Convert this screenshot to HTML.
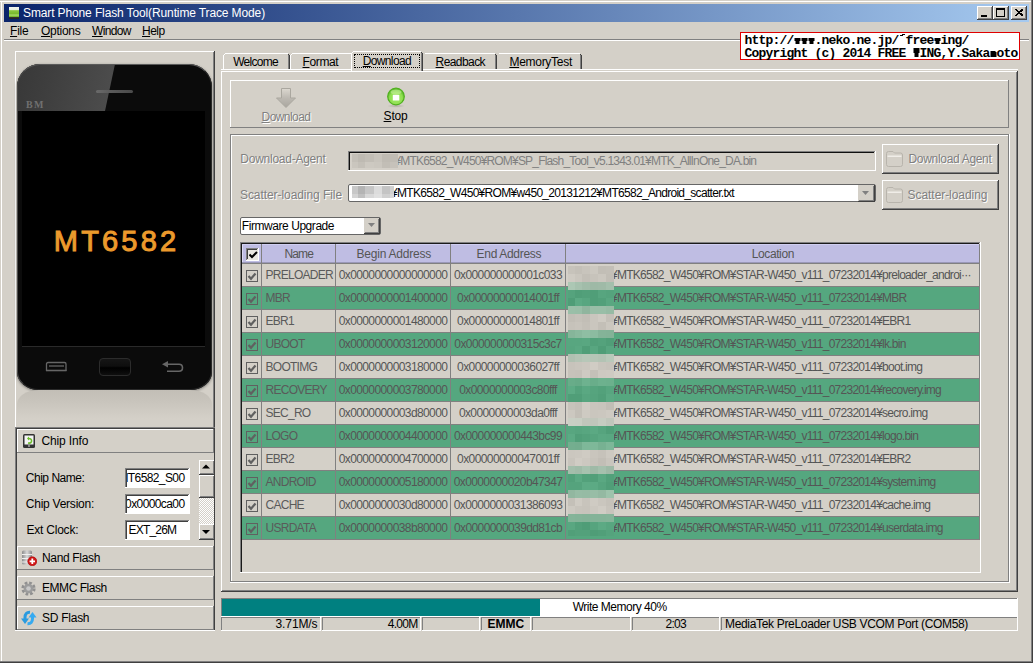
<!DOCTYPE html><html><head><meta charset="utf-8"><style>
html,body{margin:0;padding:0;}
body{width:1033px;height:663px;position:relative;overflow:hidden;background:#d4d0c8;font-family:"Liberation Sans",sans-serif;}
body div{position:absolute;box-sizing:border-box;}
u{text-decoration:underline;text-decoration-thickness:1px;text-underline-offset:1px;}
</style></head><body>
<div style="left:0px;top:1px;width:1032px;height:1px;background:#fff"></div>
<div style="left:1px;top:1px;width:1px;height:661px;background:#fff"></div>
<div style="left:1031px;top:0px;width:1px;height:662px;background:#808080"></div>
<div style="left:1032px;top:0px;width:1px;height:663px;background:#404040"></div>
<div style="left:0px;top:661px;width:1032px;height:1px;background:#808080"></div>
<div style="left:0px;top:662px;width:1033px;height:1px;background:#404040"></div>
<div style="left:4px;top:4px;width:1025px;height:18px;background:linear-gradient(to right,#0a246a,#a6caf0)"></div>
<div style="left:9px;top:7px;width:10px;height:12px;background:linear-gradient(#f0f4f0 0,#e8efe0 25%,#8cc63f 30%,#76b82a 60%,#b6e07a 65%,#76b82a 80%,#333 85%,#222 100%)"></div>
<div style="left:23px;top:6.00px;font-size:12px;line-height:15px;color:#fff;font-family:'Liberation Sans', sans-serif;font-weight:normal;white-space:pre;letter-spacing:-0.124px;">Smart Phone Flash Tool(Runtime Trace Mode)</div>
<div style="left:977px;top:6px;width:16px;height:14px;background:#d4d0c8"></div>
<div style="left:977px;top:6px;width:15px;height:1px;background:#fff"></div>
<div style="left:977px;top:6px;width:1px;height:13px;background:#fff"></div>
<div style="left:977px;top:19px;width:16px;height:1px;background:#404040"></div>
<div style="left:992px;top:6px;width:1px;height:14px;background:#404040"></div>
<div style="left:978px;top:18px;width:14px;height:1px;background:#808080"></div>
<div style="left:991px;top:7px;width:1px;height:12px;background:#808080"></div>
<div style="left:981px;top:15px;width:6px;height:2px;background:#000"></div>
<div style="left:993px;top:6px;width:16px;height:14px;background:#d4d0c8"></div>
<div style="left:993px;top:6px;width:15px;height:1px;background:#fff"></div>
<div style="left:993px;top:6px;width:1px;height:13px;background:#fff"></div>
<div style="left:993px;top:19px;width:16px;height:1px;background:#404040"></div>
<div style="left:1008px;top:6px;width:1px;height:14px;background:#404040"></div>
<div style="left:994px;top:18px;width:14px;height:1px;background:#808080"></div>
<div style="left:1007px;top:7px;width:1px;height:12px;background:#808080"></div>
<div style="left:996px;top:8px;width:9px;height:9px;border:1px solid #000;border-top-width:2px"></div>
<div style="left:1011px;top:6px;width:16px;height:14px;background:#d4d0c8"></div>
<div style="left:1011px;top:6px;width:15px;height:1px;background:#fff"></div>
<div style="left:1011px;top:6px;width:1px;height:13px;background:#fff"></div>
<div style="left:1011px;top:19px;width:16px;height:1px;background:#404040"></div>
<div style="left:1026px;top:6px;width:1px;height:14px;background:#404040"></div>
<div style="left:1012px;top:18px;width:14px;height:1px;background:#808080"></div>
<div style="left:1025px;top:7px;width:1px;height:12px;background:#808080"></div>
<svg style="position:absolute;left:1015px;top:9px" width="8" height="7" viewBox="0 0 8 7"><path d="M0.5 0.5 L7 6.5 M1.5 0.5 L8 6.5 M7 0.5 L0.5 6.5 M8 0.5 L1.5 6.5" stroke="#000" stroke-width="1" shape-rendering="crispEdges"/></svg>
<div style="left:10px;top:24.00px;font-size:12px;line-height:15px;color:#000;font-family:'Liberation Sans', sans-serif;font-weight:normal;white-space:pre;letter-spacing:-0.190px;"><u>F</u>ile</div>
<div style="left:41px;top:24.00px;font-size:12px;line-height:15px;color:#000;font-family:'Liberation Sans', sans-serif;font-weight:normal;white-space:pre;letter-spacing:-0.268px;"><u>O</u>ptions</div>
<div style="left:92px;top:24.00px;font-size:12px;line-height:15px;color:#000;font-family:'Liberation Sans', sans-serif;font-weight:normal;white-space:pre;letter-spacing:-0.665px;"><u>W</u>indow</div>
<div style="left:142px;top:24.00px;font-size:12px;line-height:15px;color:#000;font-family:'Liberation Sans', sans-serif;font-weight:normal;white-space:pre;letter-spacing:-0.497px;"><u>H</u>elp</div>
<div style="left:4px;top:39px;width:736px;height:1px;background:#808080"></div>
<div style="left:4px;top:40px;width:736px;height:1px;background:#fff"></div>
<div style="left:1020px;top:39px;width:9px;height:1px;background:#808080"></div>
<div style="left:1020px;top:40px;width:9px;height:1px;background:#fff"></div>
<div style="left:740px;top:32px;width:280px;height:28px;background:#fff;border:1px solid #e00000"></div>
<div style="left:744.5px;top:33.00px;font-size:13px;line-height:16px;color:#000;font-family:'Liberation Mono',monospace;font-weight:bold;white-space:pre;letter-spacing:-0.800px;">http://<span style="display:inline-block;width:7px;height:6px;position:relative"><svg style="position:absolute;left:0;top:0" width="7" height="6"><path d="M0.5 0 H6.5 V3 H5.5 V6 H1.5 V3 H0.5 Z" fill="#000"/></svg></span><span style="display:inline-block;width:7px;height:6px;position:relative"><svg style="position:absolute;left:0;top:0" width="7" height="6"><path d="M0.5 0 H6.5 V3 H5.5 V6 H1.5 V3 H0.5 Z" fill="#000"/></svg></span><span style="display:inline-block;width:7px;height:6px;position:relative"><svg style="position:absolute;left:0;top:0" width="7" height="6"><path d="M0.5 0 H6.5 V3 H5.5 V6 H1.5 V3 H0.5 Z" fill="#000"/></svg></span>.neko.ne.jp/<span style="display:inline-block;width:7px;height:10px;position:relative"><svg style="position:absolute;left:0;top:0" width="7" height="10"><path d="M1 1 H3 V2 H1 Z M3 0 H6 V1 H3 Z M2 1 H4 V2 H2 Z" fill="#000"/></svg></span>free<span style="display:inline-block;width:7px;height:6px;position:relative"><svg style="position:absolute;left:0;top:0" width="7" height="6"><path d="M0.5 0 H6.5 V3 H5.5 V6 H1.5 V3 H0.5 Z" fill="#000"/></svg></span>ing/</div>
<div style="left:744.5px;top:46.00px;font-size:13px;line-height:16px;color:#000;font-family:'Liberation Mono',monospace;font-weight:bold;white-space:pre;letter-spacing:-0.800px;">Copyright (c) 2014 FREE <span style="display:inline-block;width:7px;height:9px;position:relative"><svg style="position:absolute;left:0;top:0" width="7" height="9"><path d="M0.5 0 H6.5 V5 H5.5 V9 H1.5 V5 H0.5 Z" fill="#000"/></svg></span>ING,Y.Saka<span style="display:inline-block;width:7px;height:6px;position:relative"><svg style="position:absolute;left:0;top:0" width="7" height="6"><path d="M0.5 0 H5.5 V1 H6.5 V6 H0.5 Z" fill="#000"/></svg></span>oto</div>
<div style="left:15px;top:51px;width:200px;height:1px;background:#fff"></div>
<div style="left:15px;top:51px;width:1px;height:377px;background:#fff"></div>
<div style="left:213px;top:52px;width:1px;height:376px;background:#808080"></div>
<div style="left:214px;top:51px;width:1px;height:378px;background:#404040"></div>
<div style="left:17px;top:64px;width:195px;height:326px;border-radius:23px 23px 22px 22px/23px 23px 18px 18px;background:#0b0b0b;box-shadow:0 1px 3px rgba(0,0,0,0.45)"></div>
<div style="left:17px;top:64px;width:195px;height:47px;border-radius:23px 23px 0 0;overflow:hidden;"><div style="left:-10px;top:0;width:108px;height:60px;background:linear-gradient(to right,#363636,#3e3e3e 40%,#4c4c4c);transform:skewX(-12deg);transform-origin:0 0"></div></div>
<div style="left:17px;top:64px;width:195px;height:326px;border-radius:23px 23px 22px 22px/23px 23px 18px 18px;border:1px solid #2a2a2a;border-top-color:#5a5a5a;border-left-color:#4a4a4a"></div>
<div style="left:96px;top:90px;width:37px;height:3px;background:linear-gradient(to right,#6a6a6a,#5e5e5e 30%,#4a4a4a);border-radius:2px"></div>
<div style="left:26px;top:99.00px;font-size:10px;line-height:12px;color:#707070;font-family:'Liberation Serif',serif;font-weight:bold;white-space:pre;letter-spacing:1.445px;">BM</div>
<div style="left:22px;top:111px;width:183px;height:235px;background:#000"></div>
<div style="left:22px;top:346px;width:183px;height:1px;background:#2a2a2a"></div>
<div style="left:53.8px;top:223.00px;font-size:29px;line-height:36px;color:#ec9a2c;font-family:'Liberation Sans', sans-serif;font-weight:normal;white-space:pre;letter-spacing:3.185px;-webkit-text-stroke:1px #ec9a2c;">MT6582</div>
<svg style="position:absolute;left:40px;top:355px" width="150" height="25" viewBox="0 0 150 25"><path d="M6.5 16 V9 Q6.5 7.5 8 7.5 H24.5 Q26 7.5 26 9 V16" fill="none" stroke="#666" stroke-width="1.3"/><line x1="9" y1="11" x2="24" y2="11" stroke="#666" stroke-width="1.3"/><line x1="6" y1="15.5" x2="26.5" y2="15.5" stroke="#666" stroke-width="1.6"/><defs><linearGradient id="hb" x1="0" y1="0" x2="0" y2="1"><stop offset="0" stop-color="#161616"/><stop offset="0.45" stop-color="#0e0e0e"/><stop offset="0.55" stop-color="#000"/><stop offset="1" stop-color="#101010"/></linearGradient></defs><rect x="59.5" y="3.5" width="31" height="17" rx="3.5" fill="url(#hb)" stroke="#2c2c2c" stroke-width="1"/><path d="M126 9.3 H139 Q142.5 9.3 142.5 12.8 Q142.5 16.3 139 16.3 H127" fill="none" stroke="#666" stroke-width="1.6"/><path d="M122 9.3 L128 6 L128 12.6 Z" fill="#666"/></svg>
<div style="left:17px;top:390px;width:195px;height:36px;border-radius:22px 22px 0 0/14px 14px 0 0;background:linear-gradient(#c2beb6,#c9c5bd 35%,#d4d0c8 80%)"></div>
<div style="left:16px;top:428px;width:199px;height:1px;background:#404040"></div>
<div style="left:16px;top:428px;width:1px;height:203px;background:#404040"></div>
<div style="left:15px;top:427px;width:200px;height:1px;background:#808080"></div>
<div style="left:15px;top:428px;width:1px;height:203px;background:#808080"></div>
<div style="left:214px;top:428px;width:1px;height:203px;background:#404040"></div>
<div style="left:15px;top:630px;width:200px;height:1px;background:#fff"></div>
<div style="left:17px;top:429px;width:197px;height:1px;background:#fff"></div>
<div style="left:17px;top:429px;width:1px;height:24px;background:#fff"></div>
<div style="left:17px;top:452px;width:197px;height:1px;background:#808080"></div>
<div style="left:213px;top:429px;width:1px;height:24px;background:#808080"></div>
<svg style="position:absolute;left:23px;top:434px" width="12" height="14" viewBox="0 0 12 14"><rect x="0" y="0" width="12" height="14" rx="1.5" fill="#333"/><rect x="1.5" y="1.5" width="9" height="9" fill="#f4f4f4"/><path d="M4 4.5 L6 2.5 L6 6.5 Z" fill="#6cbd2a"/><path d="M5.5 4.5 Q9 4.5 8.5 7.5 Q8 9.5 5 9" fill="none" stroke="#6cbd2a" stroke-width="1.6"/><rect x="5" y="11.5" width="2" height="1" fill="#ddd"/></svg>
<div style="left:41.5px;top:434.00px;font-size:12px;line-height:15px;color:#000;font-family:'Liberation Sans', sans-serif;font-weight:normal;white-space:pre;letter-spacing:-0.148px;">Chip Info</div>
<div style="left:25.8px;top:471.00px;font-size:12px;line-height:15px;color:#000;font-family:'Liberation Sans', sans-serif;font-weight:normal;white-space:pre;letter-spacing:-0.486px;">Chip Name:</div>
<div style="left:25.8px;top:497.00px;font-size:12px;line-height:15px;color:#000;font-family:'Liberation Sans', sans-serif;font-weight:normal;white-space:pre;letter-spacing:-0.244px;">Chip Version:</div>
<div style="left:26.5px;top:523.00px;font-size:12px;line-height:15px;color:#000;font-family:'Liberation Sans', sans-serif;font-weight:normal;white-space:pre;letter-spacing:-0.222px;">Ext Clock:</div>
<div style="left:125px;top:468px;width:65px;height:20px;background:#fff"></div>
<div style="left:125px;top:468px;width:64px;height:1px;background:#808080"></div>
<div style="left:125px;top:468px;width:1px;height:19px;background:#808080"></div>
<div style="left:126px;top:469px;width:62px;height:1px;background:#404040"></div>
<div style="left:126px;top:469px;width:1px;height:18px;background:#404040"></div>
<div style="left:125px;top:487px;width:65px;height:1px;background:#fff"></div>
<div style="left:189px;top:468px;width:1px;height:20px;background:#fff"></div>
<div style="left:127px;top:470px;width:61px;height:16px;overflow:hidden"><div style="right:3.5px;top:0;font-size:12px;line-height:16px;white-space:pre;letter-spacing:-0.6px">MT6582_S00</div></div>
<div style="left:125px;top:494px;width:65px;height:20px;background:#fff"></div>
<div style="left:125px;top:494px;width:64px;height:1px;background:#808080"></div>
<div style="left:125px;top:494px;width:1px;height:19px;background:#808080"></div>
<div style="left:126px;top:495px;width:62px;height:1px;background:#404040"></div>
<div style="left:126px;top:495px;width:1px;height:18px;background:#404040"></div>
<div style="left:125px;top:513px;width:65px;height:1px;background:#fff"></div>
<div style="left:189px;top:494px;width:1px;height:20px;background:#fff"></div>
<div style="left:127px;top:496px;width:61px;height:16px;overflow:hidden"><div style="right:3.5px;top:0;font-size:12px;line-height:16px;white-space:pre;letter-spacing:-0.6px">0x0000ca00</div></div>
<div style="left:125px;top:520px;width:65px;height:20px;background:#fff"></div>
<div style="left:125px;top:520px;width:64px;height:1px;background:#808080"></div>
<div style="left:125px;top:520px;width:1px;height:19px;background:#808080"></div>
<div style="left:126px;top:521px;width:62px;height:1px;background:#404040"></div>
<div style="left:126px;top:521px;width:1px;height:18px;background:#404040"></div>
<div style="left:125px;top:539px;width:65px;height:1px;background:#fff"></div>
<div style="left:189px;top:520px;width:1px;height:20px;background:#fff"></div>
<div style="left:127px;top:522px;width:61px;height:16px;overflow:hidden"><div style="left:1.5px;top:0;font-size:12px;line-height:16px;white-space:pre;letter-spacing:-0.8px">EXT_26M</div></div>
<div style="left:199px;top:474px;width:15px;height:50px;background:repeating-conic-gradient(#fff 0 25%,#d4d0c8 0 50%) 0 0/2px 2px"></div>
<div style="left:199px;top:460px;width:16px;height:15px;background:#d4d0c8"></div>
<div style="left:199px;top:460px;width:15px;height:1px;background:#fff"></div>
<div style="left:199px;top:460px;width:1px;height:14px;background:#fff"></div>
<div style="left:199px;top:474px;width:16px;height:1px;background:#404040"></div>
<div style="left:214px;top:460px;width:1px;height:15px;background:#404040"></div>
<div style="left:200px;top:473px;width:14px;height:1px;background:#808080"></div>
<div style="left:213px;top:461px;width:1px;height:13px;background:#808080"></div>
<svg style="position:absolute;left:202px;top:464px" width="9" height="5"><path d="M0 4.5 H8 L4 0.5 Z" fill="#000"/></svg>
<div style="left:199px;top:475px;width:16px;height:23px;background:#d4d0c8"></div>
<div style="left:199px;top:475px;width:15px;height:1px;background:#fff"></div>
<div style="left:199px;top:475px;width:1px;height:22px;background:#fff"></div>
<div style="left:199px;top:497px;width:16px;height:1px;background:#404040"></div>
<div style="left:214px;top:475px;width:1px;height:23px;background:#404040"></div>
<div style="left:200px;top:496px;width:14px;height:1px;background:#808080"></div>
<div style="left:213px;top:476px;width:1px;height:21px;background:#808080"></div>
<div style="left:199px;top:524px;width:16px;height:16px;background:#d4d0c8"></div>
<div style="left:199px;top:524px;width:15px;height:1px;background:#fff"></div>
<div style="left:199px;top:524px;width:1px;height:15px;background:#fff"></div>
<div style="left:199px;top:539px;width:16px;height:1px;background:#404040"></div>
<div style="left:214px;top:524px;width:1px;height:16px;background:#404040"></div>
<div style="left:200px;top:538px;width:14px;height:1px;background:#808080"></div>
<div style="left:213px;top:525px;width:1px;height:14px;background:#808080"></div>
<svg style="position:absolute;left:202px;top:530px" width="9" height="5"><path d="M0 0 H8 L4 4 Z" fill="#000"/></svg>
<div style="left:17px;top:546px;width:197px;height:1px;background:#fff"></div>
<div style="left:17px;top:546px;width:1px;height:24px;background:#fff"></div>
<div style="left:17px;top:569px;width:197px;height:1px;background:#808080"></div>
<div style="left:213px;top:546px;width:1px;height:24px;background:#808080"></div>
<svg style="position:absolute;left:21px;top:550px" width="16" height="16" viewBox="0 0 16 16"><defs><linearGradient id="ng" x1="0" x2="1"><stop offset="0" stop-color="#8c8c8c"/><stop offset="0.5" stop-color="#d8d8d8"/><stop offset="1" stop-color="#8c8c8c"/></linearGradient></defs><rect x="1" y="0.5" width="10" height="14" rx="1.5" fill="url(#ng)"/><path d="M1 4.5 H11 M1 8.5 H11 M1 12 H11" stroke="#f0f0f0" stroke-width="1"/><circle cx="11.3" cy="11.3" r="4.5" fill="#d01818" stroke="#a00" stroke-width="0.6"/><path d="M11.3 8.6 V14 M8.6 11.3 H14" stroke="#fff" stroke-width="1.8"/></svg>
<div style="left:42px;top:551.00px;font-size:12px;line-height:15px;color:#000;font-family:'Liberation Sans', sans-serif;font-weight:normal;white-space:pre;letter-spacing:-0.338px;">Nand Flash</div>
<div style="left:17px;top:576px;width:197px;height:1px;background:#fff"></div>
<div style="left:17px;top:576px;width:1px;height:24px;background:#fff"></div>
<div style="left:17px;top:599px;width:197px;height:1px;background:#808080"></div>
<div style="left:213px;top:576px;width:1px;height:24px;background:#808080"></div>
<svg style="position:absolute;left:21px;top:581px" width="16" height="16" viewBox="0 0 16 16"><circle cx="7.5" cy="7.5" r="5.6" fill="none" stroke="#909090" stroke-width="3" stroke-dasharray="2.6 1.8"/><circle cx="7.5" cy="7.5" r="4.8" fill="#9c9c9c"/><circle cx="7.5" cy="7.5" r="2.3" fill="#c8c8c8"/></svg>
<div style="left:42px;top:581.00px;font-size:12px;line-height:15px;color:#000;font-family:'Liberation Sans', sans-serif;font-weight:normal;white-space:pre;letter-spacing:-0.454px;">EMMC Flash</div>
<div style="left:17px;top:606px;width:197px;height:1px;background:#fff"></div>
<div style="left:17px;top:606px;width:1px;height:24px;background:#fff"></div>
<div style="left:17px;top:629px;width:197px;height:1px;background:#808080"></div>
<div style="left:213px;top:606px;width:1px;height:24px;background:#808080"></div>
<svg style="position:absolute;left:21px;top:610px" width="16" height="16" viewBox="0 0 16 16"><path d="M9 2.3 Q4 2 4 7.5 V9" fill="none" stroke="#2a9be0" stroke-width="3"/><path d="M0 8.5 H8 L4 14 Z" fill="#2a9be0"/><path d="M6.5 13.7 Q11.5 14 11.5 8.5 V7" fill="none" stroke="#36aaf0" stroke-width="3"/><path d="M7.5 7.5 H15.5 L11.5 2 Z" fill="#36aaf0"/></svg>
<div style="left:42px;top:611.00px;font-size:12px;line-height:15px;color:#000;font-family:'Liberation Sans', sans-serif;font-weight:normal;white-space:pre;letter-spacing:-0.257px;">SD Flash</div>
<div style="left:221px;top:69px;width:797px;height:1px;background:#fff"></div>
<div style="left:221px;top:71px;width:796px;height:1px;background:#fff"></div>
<div style="left:221px;top:71px;width:1px;height:521px;background:#fff"></div>
<div style="left:1016px;top:72px;width:1px;height:519px;background:#808080"></div>
<div style="left:1017px;top:71px;width:1px;height:521px;background:#404040"></div>
<div style="left:222px;top:590px;width:795px;height:1px;background:#808080"></div>
<div style="left:221px;top:591px;width:797px;height:1px;background:#404040"></div>
<div style="left:223px;top:53px;width:67px;height:16px;background:#d4d0c8"></div>
<div style="left:225px;top:53px;width:63px;height:1px;background:#fff"></div>
<div style="left:223px;top:55px;width:1px;height:14px;background:#fff"></div>
<div style="left:224px;top:54px;width:1px;height:1px;background:#fff"></div>
<div style="left:288px;top:54px;width:1px;height:15px;background:#808080"></div>
<div style="left:289px;top:55px;width:1px;height:14px;background:#404040"></div>
<div style="left:288px;top:54px;width:1px;height:1px;background:#404040"></div>
<div style="left:290px;top:53px;width:63px;height:16px;background:#d4d0c8"></div>
<div style="left:292px;top:53px;width:61px;height:1px;background:#fff"></div>
<div style="left:290px;top:55px;width:1px;height:14px;background:#fff"></div>
<div style="left:291px;top:54px;width:1px;height:1px;background:#fff"></div>
<div style="left:423px;top:53px;width:74px;height:16px;background:#d4d0c8"></div>
<div style="left:425px;top:53px;width:70px;height:1px;background:#fff"></div>
<div style="left:495px;top:54px;width:1px;height:15px;background:#808080"></div>
<div style="left:496px;top:55px;width:1px;height:14px;background:#404040"></div>
<div style="left:495px;top:54px;width:1px;height:1px;background:#404040"></div>
<div style="left:497px;top:53px;width:85px;height:16px;background:#d4d0c8"></div>
<div style="left:499px;top:53px;width:81px;height:1px;background:#fff"></div>
<div style="left:580px;top:54px;width:1px;height:15px;background:#808080"></div>
<div style="left:581px;top:55px;width:1px;height:14px;background:#404040"></div>
<div style="left:580px;top:54px;width:1px;height:1px;background:#404040"></div>
<div style="left:351px;top:51px;width:72px;height:20px;background:#d4d0c8"></div>
<div style="left:353px;top:51px;width:68px;height:1px;background:#fff"></div>
<div style="left:351px;top:53px;width:1px;height:18px;background:#fff"></div>
<div style="left:352px;top:52px;width:1px;height:1px;background:#fff"></div>
<div style="left:421px;top:52px;width:1px;height:19px;background:#808080"></div>
<div style="left:422px;top:53px;width:1px;height:18px;background:#404040"></div>
<div style="left:421px;top:52px;width:1px;height:1px;background:#404040"></div>
<div style="left:233.2px;top:55.00px;font-size:12px;line-height:15px;color:#000;font-family:'Liberation Sans', sans-serif;font-weight:normal;white-space:pre;letter-spacing:-0.728px;">Welcome</div>
<div style="left:302.5px;top:55.00px;font-size:12px;line-height:15px;color:#000;font-family:'Liberation Sans', sans-serif;font-weight:normal;white-space:pre;letter-spacing:-0.372px;"><u>F</u>ormat</div>
<div style="left:362.7px;top:54.00px;font-size:12px;line-height:15px;color:#000;font-family:'Liberation Sans', sans-serif;font-weight:normal;white-space:pre;letter-spacing:-0.634px;"><u>D</u>ownload</div>
<div style="left:435.6px;top:55.00px;font-size:12px;line-height:15px;color:#000;font-family:'Liberation Sans', sans-serif;font-weight:normal;white-space:pre;letter-spacing:-0.581px;"><u>R</u>eadback</div>
<div style="left:509.4px;top:55.00px;font-size:12px;line-height:15px;color:#000;font-family:'Liberation Sans', sans-serif;font-weight:normal;white-space:pre;letter-spacing:-0.276px;"><u>M</u>emoryTest</div>
<div style="left:354px;top:54px;width:66px;height:14px;border:1px dotted #000"></div>
<div style="left:230px;top:80px;width:779px;height:1px;background:#fff"></div>
<div style="left:230px;top:80px;width:1px;height:48px;background:#fff"></div>
<div style="left:230px;top:127px;width:779px;height:1px;background:#808080"></div>
<div style="left:1008px;top:80px;width:1px;height:48px;background:#808080"></div>
<svg style="position:absolute;left:276px;top:88px" width="20" height="20" viewBox="0 0 20 20"><defs><linearGradient id="ga" x1="0" y1="0" x2="0" y2="1"><stop offset="0" stop-color="#dcd8d0"/><stop offset="0.5" stop-color="#bdb9b2"/><stop offset="1" stop-color="#a9a69f"/></linearGradient></defs><path d="M5.5 0.5 H14.5 V10 H19.5 L10 19.5 L0.5 10 H5.5 Z" fill="url(#ga)" stroke="#aaa79f" stroke-width="1"/></svg>
<div style="left:262.5px;top:111.00px;font-size:12px;line-height:15px;color:#fff;font-family:'Liberation Sans', sans-serif;font-weight:normal;white-space:pre;letter-spacing:-0.547px;"><u>D</u>ownload</div>
<div style="left:261.5px;top:110.00px;font-size:12px;line-height:15px;color:#808080;font-family:'Liberation Sans', sans-serif;font-weight:normal;white-space:pre;letter-spacing:-0.547px;"><u>D</u>ownload</div>
<svg style="position:absolute;left:385px;top:86px" width="22" height="22" viewBox="0 0 22 22"><defs><radialGradient id="gs" cx="0.5" cy="0.62" r="0.55"><stop offset="0" stop-color="#a0e868"/><stop offset="0.7" stop-color="#90e050"/><stop offset="1" stop-color="#58b828"/></radialGradient><radialGradient id="sh" cx="0.5" cy="0.5" r="0.5"><stop offset="0" stop-color="#b0aca4"/><stop offset="1" stop-color="#d4d0c8"/></radialGradient></defs><ellipse cx="11" cy="20" rx="9" ry="1.8" fill="url(#sh)"/><circle cx="11" cy="10.5" r="8.3" fill="url(#gs)" stroke="#50b01e" stroke-width="1.2"/><ellipse cx="11" cy="6" rx="5.5" ry="2.5" fill="#c8f0a0" opacity="0.6"/><rect x="7.8" y="8.8" width="6.5" height="5.7" fill="#fff"/></svg>
<div style="left:383.6px;top:109.00px;font-size:12px;line-height:15px;color:#000;font-family:'Liberation Sans', sans-serif;font-weight:normal;white-space:pre;letter-spacing:-0.226px;"><u>S</u>top</div>
<div style="left:230px;top:134px;width:779px;height:1px;background:#808080"></div>
<div style="left:230px;top:134px;width:1px;height:448px;background:#808080"></div>
<div style="left:231px;top:135px;width:777px;height:1px;background:#fff"></div>
<div style="left:231px;top:135px;width:1px;height:446px;background:#fff"></div>
<div style="left:230px;top:581px;width:779px;height:1px;background:#808080"></div>
<div style="left:1008px;top:134px;width:1px;height:448px;background:#808080"></div>
<div style="left:230px;top:582px;width:780px;height:1px;background:#fff"></div>
<div style="left:1009px;top:134px;width:1px;height:449px;background:#fff"></div>
<div style="left:240.3px;top:152.00px;font-size:12px;line-height:15px;color:#808080;font-family:'Liberation Sans', sans-serif;font-weight:normal;white-space:pre;letter-spacing:-0.252px;text-shadow:1px 1px 0 #fff;">Download-Agent</div>
<div style="left:240px;top:188.00px;font-size:12px;line-height:15px;color:#808080;font-family:'Liberation Sans', sans-serif;font-weight:normal;white-space:pre;letter-spacing:-0.070px;text-shadow:1px 1px 0 #fff;">Scatter-loading File</div>
<div style="left:348px;top:151px;width:528px;height:20px;background:#d4d0c8"></div>
<div style="left:348px;top:151px;width:527px;height:1px;background:#808080"></div>
<div style="left:348px;top:151px;width:1px;height:19px;background:#808080"></div>
<div style="left:349px;top:152px;width:525px;height:1px;background:#101010"></div>
<div style="left:349px;top:152px;width:1px;height:18px;background:#101010"></div>
<div style="left:348px;top:170px;width:528px;height:1px;background:#fff"></div>
<div style="left:875px;top:151px;width:1px;height:20px;background:#fff"></div>
<div style="left:394.5px;top:154.00px;font-size:12px;line-height:15px;color:#808080;font-family:'Liberation Sans', sans-serif;font-weight:normal;white-space:pre;letter-spacing:-0.815px;">&yen;MTK6582_W450&yen;ROM&yen;SP_Flash_Tool_v5.1343.01&yen;MTK_AllInOne_DA.bin</div>
<div style="left:352px;top:154px;width:46px;height:14px;overflow:hidden"><div style="left:0px;top:0px;width:6px;height:8px;background:#c4c0b8"></div><div style="left:6px;top:0px;width:7px;height:8px;background:#bebab2"></div><div style="left:13px;top:0px;width:9px;height:8px;background:#c2beb6"></div><div style="left:22px;top:0px;width:8px;height:8px;background:#c8c4bc"></div><div style="left:30px;top:0px;width:8px;height:8px;background:#bfbbb3"></div><div style="left:38px;top:0px;width:8px;height:8px;background:#c0bcb4"></div><div style="left:0px;top:8px;width:6px;height:6px;background:#cac6be"></div><div style="left:6px;top:8px;width:7px;height:6px;background:#c4c0b8"></div><div style="left:13px;top:8px;width:9px;height:6px;background:#cdc9c1"></div><div style="left:22px;top:8px;width:8px;height:6px;background:#cbc7bf"></div><div style="left:30px;top:8px;width:8px;height:6px;background:#c2beb6"></div><div style="left:38px;top:8px;width:8px;height:6px;background:#c6c2ba"></div></div>
<div style="left:348px;top:184px;width:528px;height:18px;background:#fff;border:1px solid #666;border-radius:2px"></div>
<div style="left:391px;top:186.00px;font-size:12px;line-height:15px;color:#000;font-family:'Liberation Sans', sans-serif;font-weight:normal;white-space:pre;letter-spacing:-0.700px;">&yen;MTK6582_W450&yen;ROM&yen;w450_20131212&yen;MT6582_Android_scatter.txt</div>
<div style="left:352px;top:186px;width:42px;height:12px;overflow:hidden"><div style="left:0px;top:0px;width:6px;height:8px;background:#c8c8c8"></div><div style="left:6px;top:0px;width:7px;height:8px;background:#b4b4b4"></div><div style="left:13px;top:0px;width:9px;height:8px;background:#c6c6c6"></div><div style="left:22px;top:0px;width:8px;height:8px;background:#dcdcdc"></div><div style="left:30px;top:0px;width:8px;height:8px;background:#c4c4c4"></div><div style="left:38px;top:0px;width:4px;height:8px;background:#d0d0d0"></div><div style="left:0px;top:8px;width:6px;height:4px;background:#d4d4d4"></div><div style="left:6px;top:8px;width:7px;height:4px;background:#c0c0c0"></div><div style="left:13px;top:8px;width:9px;height:4px;background:#d8d8d8"></div><div style="left:22px;top:8px;width:8px;height:4px;background:#e0e0e0"></div><div style="left:30px;top:8px;width:8px;height:4px;background:#d0d0d0"></div><div style="left:38px;top:8px;width:4px;height:4px;background:#d8d8d8"></div></div>
<div style="left:858px;top:185px;width:17px;height:17px;background:#d4d0c8"></div>
<div style="left:874px;top:185px;width:1px;height:17px;background:#404040"></div>
<div style="left:858px;top:201px;width:17px;height:1px;background:#404040"></div>
<div style="left:873px;top:186px;width:1px;height:15px;background:#808080"></div>
<div style="left:859px;top:200px;width:15px;height:1px;background:#808080"></div>
<svg style="position:absolute;left:862px;top:191px" width="8" height="5"><path d="M0 0 H7 L3.5 4 Z" fill="#808080"/></svg>
<div style="left:882px;top:144px;width:117px;height:30px;background:#d4d0c8"></div>
<div style="left:882px;top:144px;width:116px;height:1px;background:#fff"></div>
<div style="left:882px;top:144px;width:1px;height:29px;background:#fff"></div>
<div style="left:882px;top:173px;width:117px;height:1px;background:#404040"></div>
<div style="left:998px;top:144px;width:1px;height:30px;background:#404040"></div>
<div style="left:883px;top:172px;width:115px;height:1px;background:#808080"></div>
<div style="left:997px;top:145px;width:1px;height:28px;background:#808080"></div>
<svg style="position:absolute;left:886px;top:151px" width="17" height="16" viewBox="0 0 17 16"><defs><linearGradient id="fg{y}" x1="0" y1="0" x2="0" y2="1"><stop offset="0" stop-color="#e2dfd8"/><stop offset="1" stop-color="#bfbcb5"/></linearGradient></defs><path d="M0.5 2.5 Q0.5 0.5 2.5 0.5 H7 L8.5 2 H14.5 Q16.5 2 16.5 4 V13.5 Q16.5 15.5 14.5 15.5 H2.5 Q0.5 15.5 0.5 13.5 Z" fill="url(#fg144)" stroke="#b8b4ac"/><rect x="1.5" y="4.5" width="14" height="1.5" fill="#f0ede8"/></svg>
<div style="left:908.5px;top:152.00px;font-size:12px;line-height:15px;color:#808080;font-family:'Liberation Sans', sans-serif;font-weight:normal;white-space:pre;letter-spacing:-0.315px;text-shadow:1px 1px 0 #fff;">Download Agent</div>
<div style="left:882px;top:180px;width:117px;height:30px;background:#d4d0c8"></div>
<div style="left:882px;top:180px;width:116px;height:1px;background:#fff"></div>
<div style="left:882px;top:180px;width:1px;height:29px;background:#fff"></div>
<div style="left:882px;top:209px;width:117px;height:1px;background:#404040"></div>
<div style="left:998px;top:180px;width:1px;height:30px;background:#404040"></div>
<div style="left:883px;top:208px;width:115px;height:1px;background:#808080"></div>
<div style="left:997px;top:181px;width:1px;height:28px;background:#808080"></div>
<svg style="position:absolute;left:886px;top:187px" width="17" height="16" viewBox="0 0 17 16"><defs><linearGradient id="fg{y}" x1="0" y1="0" x2="0" y2="1"><stop offset="0" stop-color="#e2dfd8"/><stop offset="1" stop-color="#bfbcb5"/></linearGradient></defs><path d="M0.5 2.5 Q0.5 0.5 2.5 0.5 H7 L8.5 2 H14.5 Q16.5 2 16.5 4 V13.5 Q16.5 15.5 14.5 15.5 H2.5 Q0.5 15.5 0.5 13.5 Z" fill="url(#fg180)" stroke="#b8b4ac"/><rect x="1.5" y="4.5" width="14" height="1.5" fill="#f0ede8"/></svg>
<div style="left:907.6px;top:188.00px;font-size:12px;line-height:15px;color:#808080;font-family:'Liberation Sans', sans-serif;font-weight:normal;white-space:pre;letter-spacing:-0.061px;text-shadow:1px 1px 0 #fff;">Scatter-loading</div>
<div style="left:240px;top:217px;width:141px;height:18px;background:#fff;border:1px solid #666;border-radius:2px"></div>
<div style="left:241.8px;top:219.00px;font-size:12px;line-height:15px;color:#000;font-family:'Liberation Sans', sans-serif;font-weight:normal;white-space:pre;letter-spacing:-0.442px;">Firmware Upgrade</div>
<div style="left:364px;top:218px;width:16px;height:16px;background:#d4d0c8"></div>
<div style="left:379px;top:218px;width:1px;height:16px;background:#404040"></div>
<div style="left:364px;top:233px;width:16px;height:1px;background:#404040"></div>
<div style="left:378px;top:219px;width:1px;height:14px;background:#808080"></div>
<div style="left:365px;top:232px;width:14px;height:1px;background:#808080"></div>
<svg style="position:absolute;left:368px;top:223px" width="8" height="5"><path d="M0 0 H7 L3.5 4 Z" fill="#808080"/></svg>
<div style="left:240px;top:242px;width:741px;height:1px;background:#808080"></div>
<div style="left:240px;top:242px;width:1px;height:331px;background:#808080"></div>
<div style="left:241px;top:243px;width:739px;height:1px;background:#1a1a1a"></div>
<div style="left:241px;top:243px;width:1px;height:329px;background:#1a1a1a"></div>
<div style="left:240px;top:572px;width:741px;height:1px;background:#fff"></div>
<div style="left:980px;top:242px;width:1px;height:331px;background:#fff"></div>
<div style="left:979px;top:243px;width:1px;height:328px;background:#d4d0c8"></div>
<div style="left:979px;top:244px;width:1px;height:296px;background:#808080"></div>
<div style="left:242px;top:244px;width:737px;height:19px;background:#bfbde3"></div>
<div style="left:242px;top:262px;width:737px;height:1px;background:#9a98b8"></div>
<div style="left:242px;top:263px;width:737px;height:1px;background:#808080"></div>
<div style="left:242px;top:244px;width:1px;height:18px;background:#dcdaf0"></div>
<div style="left:242px;top:244px;width:737px;height:1px;background:#d0cef0"></div>
<div style="left:261px;top:244px;width:1px;height:19px;background:#808080"></div>
<div style="left:335px;top:244px;width:1px;height:19px;background:#808080"></div>
<div style="left:450px;top:244px;width:1px;height:19px;background:#808080"></div>
<div style="left:565px;top:244px;width:1px;height:19px;background:#808080"></div>
<div style="left:246px;top:248px;width:13px;height:13px;background:#e8e6e0"></div>
<div style="left:246px;top:248px;width:12px;height:1px;background:#808080"></div>
<div style="left:246px;top:248px;width:1px;height:12px;background:#808080"></div>
<div style="left:247px;top:249px;width:10px;height:1px;background:#404040"></div>
<div style="left:247px;top:249px;width:1px;height:10px;background:#404040"></div>
<div style="left:246px;top:260px;width:13px;height:1px;background:#fff"></div>
<div style="left:258px;top:248px;width:1px;height:13px;background:#fff"></div>
<svg style="position:absolute;left:249px;top:251px" width="9" height="8" viewBox="0 0 9 8"><path d="M0.5 3.5 L3 6 L8 1" fill="none" stroke="#000" stroke-width="2"/></svg>
<div style="left:284.6px;top:247.00px;font-size:12px;line-height:15px;color:#555;font-family:'Liberation Sans', sans-serif;font-weight:normal;white-space:pre;letter-spacing:-0.929px;">Name</div>
<div style="left:356.5px;top:247.00px;font-size:12px;line-height:15px;color:#555;font-family:'Liberation Sans', sans-serif;font-weight:normal;white-space:pre;letter-spacing:-0.222px;">Begin Address</div>
<div style="left:476.6px;top:247.00px;font-size:12px;line-height:15px;color:#555;font-family:'Liberation Sans', sans-serif;font-weight:normal;white-space:pre;letter-spacing:-0.322px;">End Address</div>
<div style="left:751.7px;top:247.00px;font-size:12px;line-height:15px;color:#555;font-family:'Liberation Sans', sans-serif;font-weight:normal;white-space:pre;letter-spacing:-0.384px;">Location</div>
<div style="left:242px;top:264px;width:737px;height:22px;background:#d4d0c8"></div>
<div style="left:242px;top:286px;width:738px;height:1px;background:#808080"></div>
<div style="left:261px;top:264px;width:1px;height:22px;background:#808080"></div>
<div style="left:335px;top:264px;width:1px;height:22px;background:#808080"></div>
<div style="left:450px;top:264px;width:1px;height:22px;background:#808080"></div>
<div style="left:565px;top:264px;width:1px;height:22px;background:#808080"></div>
<div style="left:246px;top:270px;width:12px;height:12px;border:1px solid #606060"></div>
<svg style="position:absolute;left:247px;top:272px" width="10" height="9" viewBox="0 0 10 9"><path d="M1.5 4 L4 6.8 L8.5 1.5" fill="none" stroke="#606060" stroke-width="2.2"/></svg>
<div style="left:265.6px;top:268.00px;font-size:12px;line-height:15px;color:#5a5a5a;font-family:'Liberation Sans', sans-serif;font-weight:normal;white-space:pre;letter-spacing:-0.750px;">PRELOADER</div>
<div style="left:336px;top:268.00px;font-size:12px;line-height:15px;color:#555;font-family:'Liberation Sans', sans-serif;font-weight:normal;white-space:pre;letter-spacing:-0.600px;width:114px;text-align:center;">0x0000000000000000</div>
<div style="left:451px;top:268.00px;font-size:12px;line-height:15px;color:#555;font-family:'Liberation Sans', sans-serif;font-weight:normal;white-space:pre;letter-spacing:-0.600px;width:114px;text-align:center;">0x000000000001c033</div>
<div style="left:611px;top:268.00px;font-size:12px;line-height:15px;color:#555;font-family:'Liberation Sans', sans-serif;font-weight:normal;white-space:pre;letter-spacing:-0.740px;">&yen;MTK6582_W450&yen;ROM&yen;STAR-W450_v111_07232014&yen;preloader_androi&middot;&middot;&middot;</div>
<div style="left:242px;top:287px;width:737px;height:22px;background:#55a77f"></div>
<div style="left:242px;top:309px;width:738px;height:1px;background:#808080"></div>
<div style="left:261px;top:287px;width:1px;height:22px;background:#808080"></div>
<div style="left:335px;top:287px;width:1px;height:22px;background:#808080"></div>
<div style="left:450px;top:287px;width:1px;height:22px;background:#808080"></div>
<div style="left:565px;top:287px;width:1px;height:22px;background:#808080"></div>
<div style="left:246px;top:293px;width:12px;height:12px;border:1px solid #606060"></div>
<svg style="position:absolute;left:247px;top:295px" width="10" height="9" viewBox="0 0 10 9"><path d="M1.5 4 L4 6.8 L8.5 1.5" fill="none" stroke="#606060" stroke-width="2.2"/></svg>
<div style="left:265.6px;top:291.00px;font-size:12px;line-height:15px;color:#5a5a5a;font-family:'Liberation Sans', sans-serif;font-weight:normal;white-space:pre;letter-spacing:-0.750px;">MBR</div>
<div style="left:336px;top:291.00px;font-size:12px;line-height:15px;color:#555;font-family:'Liberation Sans', sans-serif;font-weight:normal;white-space:pre;letter-spacing:-0.600px;width:114px;text-align:center;">0x0000000001400000</div>
<div style="left:451px;top:291.00px;font-size:12px;line-height:15px;color:#555;font-family:'Liberation Sans', sans-serif;font-weight:normal;white-space:pre;letter-spacing:-0.600px;width:114px;text-align:center;">0x00000000014001ff</div>
<div style="left:611px;top:291.00px;font-size:12px;line-height:15px;color:#555;font-family:'Liberation Sans', sans-serif;font-weight:normal;white-space:pre;letter-spacing:-0.740px;">&yen;MTK6582_W450&yen;ROM&yen;STAR-W450_v111_07232014&yen;MBR</div>
<div style="left:242px;top:310px;width:737px;height:22px;background:#d4d0c8"></div>
<div style="left:242px;top:332px;width:738px;height:1px;background:#808080"></div>
<div style="left:261px;top:310px;width:1px;height:22px;background:#808080"></div>
<div style="left:335px;top:310px;width:1px;height:22px;background:#808080"></div>
<div style="left:450px;top:310px;width:1px;height:22px;background:#808080"></div>
<div style="left:565px;top:310px;width:1px;height:22px;background:#808080"></div>
<div style="left:246px;top:316px;width:12px;height:12px;border:1px solid #606060"></div>
<svg style="position:absolute;left:247px;top:318px" width="10" height="9" viewBox="0 0 10 9"><path d="M1.5 4 L4 6.8 L8.5 1.5" fill="none" stroke="#606060" stroke-width="2.2"/></svg>
<div style="left:265.6px;top:314.00px;font-size:12px;line-height:15px;color:#5a5a5a;font-family:'Liberation Sans', sans-serif;font-weight:normal;white-space:pre;letter-spacing:-0.750px;">EBR1</div>
<div style="left:336px;top:314.00px;font-size:12px;line-height:15px;color:#555;font-family:'Liberation Sans', sans-serif;font-weight:normal;white-space:pre;letter-spacing:-0.600px;width:114px;text-align:center;">0x0000000001480000</div>
<div style="left:451px;top:314.00px;font-size:12px;line-height:15px;color:#555;font-family:'Liberation Sans', sans-serif;font-weight:normal;white-space:pre;letter-spacing:-0.600px;width:114px;text-align:center;">0x00000000014801ff</div>
<div style="left:611px;top:314.00px;font-size:12px;line-height:15px;color:#555;font-family:'Liberation Sans', sans-serif;font-weight:normal;white-space:pre;letter-spacing:-0.740px;">&yen;MTK6582_W450&yen;ROM&yen;STAR-W450_v111_07232014&yen;EBR1</div>
<div style="left:242px;top:333px;width:737px;height:22px;background:#55a77f"></div>
<div style="left:242px;top:355px;width:738px;height:1px;background:#808080"></div>
<div style="left:261px;top:333px;width:1px;height:22px;background:#808080"></div>
<div style="left:335px;top:333px;width:1px;height:22px;background:#808080"></div>
<div style="left:450px;top:333px;width:1px;height:22px;background:#808080"></div>
<div style="left:565px;top:333px;width:1px;height:22px;background:#808080"></div>
<div style="left:246px;top:339px;width:12px;height:12px;border:1px solid #606060"></div>
<svg style="position:absolute;left:247px;top:341px" width="10" height="9" viewBox="0 0 10 9"><path d="M1.5 4 L4 6.8 L8.5 1.5" fill="none" stroke="#606060" stroke-width="2.2"/></svg>
<div style="left:265.6px;top:337.00px;font-size:12px;line-height:15px;color:#5a5a5a;font-family:'Liberation Sans', sans-serif;font-weight:normal;white-space:pre;letter-spacing:-0.750px;">UBOOT</div>
<div style="left:336px;top:337.00px;font-size:12px;line-height:15px;color:#555;font-family:'Liberation Sans', sans-serif;font-weight:normal;white-space:pre;letter-spacing:-0.600px;width:114px;text-align:center;">0x0000000003120000</div>
<div style="left:451px;top:337.00px;font-size:12px;line-height:15px;color:#555;font-family:'Liberation Sans', sans-serif;font-weight:normal;white-space:pre;letter-spacing:-0.600px;width:114px;text-align:center;">0x000000000315c3c7</div>
<div style="left:611px;top:337.00px;font-size:12px;line-height:15px;color:#555;font-family:'Liberation Sans', sans-serif;font-weight:normal;white-space:pre;letter-spacing:-0.740px;">&yen;MTK6582_W450&yen;ROM&yen;STAR-W450_v111_07232014&yen;lk.bin</div>
<div style="left:242px;top:356px;width:737px;height:22px;background:#d4d0c8"></div>
<div style="left:242px;top:378px;width:738px;height:1px;background:#808080"></div>
<div style="left:261px;top:356px;width:1px;height:22px;background:#808080"></div>
<div style="left:335px;top:356px;width:1px;height:22px;background:#808080"></div>
<div style="left:450px;top:356px;width:1px;height:22px;background:#808080"></div>
<div style="left:565px;top:356px;width:1px;height:22px;background:#808080"></div>
<div style="left:246px;top:362px;width:12px;height:12px;border:1px solid #606060"></div>
<svg style="position:absolute;left:247px;top:364px" width="10" height="9" viewBox="0 0 10 9"><path d="M1.5 4 L4 6.8 L8.5 1.5" fill="none" stroke="#606060" stroke-width="2.2"/></svg>
<div style="left:265.6px;top:360.00px;font-size:12px;line-height:15px;color:#5a5a5a;font-family:'Liberation Sans', sans-serif;font-weight:normal;white-space:pre;letter-spacing:-0.750px;">BOOTIMG</div>
<div style="left:336px;top:360.00px;font-size:12px;line-height:15px;color:#555;font-family:'Liberation Sans', sans-serif;font-weight:normal;white-space:pre;letter-spacing:-0.600px;width:114px;text-align:center;">0x0000000003180000</div>
<div style="left:451px;top:360.00px;font-size:12px;line-height:15px;color:#555;font-family:'Liberation Sans', sans-serif;font-weight:normal;white-space:pre;letter-spacing:-0.600px;width:114px;text-align:center;">0x00000000036027ff</div>
<div style="left:611px;top:360.00px;font-size:12px;line-height:15px;color:#555;font-family:'Liberation Sans', sans-serif;font-weight:normal;white-space:pre;letter-spacing:-0.740px;">&yen;MTK6582_W450&yen;ROM&yen;STAR-W450_v111_07232014&yen;boot.img</div>
<div style="left:242px;top:379px;width:737px;height:22px;background:#55a77f"></div>
<div style="left:242px;top:401px;width:738px;height:1px;background:#808080"></div>
<div style="left:261px;top:379px;width:1px;height:22px;background:#808080"></div>
<div style="left:335px;top:379px;width:1px;height:22px;background:#808080"></div>
<div style="left:450px;top:379px;width:1px;height:22px;background:#808080"></div>
<div style="left:565px;top:379px;width:1px;height:22px;background:#808080"></div>
<div style="left:246px;top:385px;width:12px;height:12px;border:1px solid #606060"></div>
<svg style="position:absolute;left:247px;top:387px" width="10" height="9" viewBox="0 0 10 9"><path d="M1.5 4 L4 6.8 L8.5 1.5" fill="none" stroke="#606060" stroke-width="2.2"/></svg>
<div style="left:265.6px;top:383.00px;font-size:12px;line-height:15px;color:#5a5a5a;font-family:'Liberation Sans', sans-serif;font-weight:normal;white-space:pre;letter-spacing:-0.750px;">RECOVERY</div>
<div style="left:336px;top:383.00px;font-size:12px;line-height:15px;color:#555;font-family:'Liberation Sans', sans-serif;font-weight:normal;white-space:pre;letter-spacing:-0.600px;width:114px;text-align:center;">0x0000000003780000</div>
<div style="left:451px;top:383.00px;font-size:12px;line-height:15px;color:#555;font-family:'Liberation Sans', sans-serif;font-weight:normal;white-space:pre;letter-spacing:-0.600px;width:114px;text-align:center;">0x0000000003c80fff</div>
<div style="left:611px;top:383.00px;font-size:12px;line-height:15px;color:#555;font-family:'Liberation Sans', sans-serif;font-weight:normal;white-space:pre;letter-spacing:-0.740px;">&yen;MTK6582_W450&yen;ROM&yen;STAR-W450_v111_07232014&yen;recovery.img</div>
<div style="left:242px;top:402px;width:737px;height:22px;background:#d4d0c8"></div>
<div style="left:242px;top:424px;width:738px;height:1px;background:#808080"></div>
<div style="left:261px;top:402px;width:1px;height:22px;background:#808080"></div>
<div style="left:335px;top:402px;width:1px;height:22px;background:#808080"></div>
<div style="left:450px;top:402px;width:1px;height:22px;background:#808080"></div>
<div style="left:565px;top:402px;width:1px;height:22px;background:#808080"></div>
<div style="left:246px;top:408px;width:12px;height:12px;border:1px solid #606060"></div>
<svg style="position:absolute;left:247px;top:410px" width="10" height="9" viewBox="0 0 10 9"><path d="M1.5 4 L4 6.8 L8.5 1.5" fill="none" stroke="#606060" stroke-width="2.2"/></svg>
<div style="left:265.6px;top:406.00px;font-size:12px;line-height:15px;color:#5a5a5a;font-family:'Liberation Sans', sans-serif;font-weight:normal;white-space:pre;letter-spacing:-0.750px;">SEC_RO</div>
<div style="left:336px;top:406.00px;font-size:12px;line-height:15px;color:#555;font-family:'Liberation Sans', sans-serif;font-weight:normal;white-space:pre;letter-spacing:-0.600px;width:114px;text-align:center;">0x0000000003d80000</div>
<div style="left:451px;top:406.00px;font-size:12px;line-height:15px;color:#555;font-family:'Liberation Sans', sans-serif;font-weight:normal;white-space:pre;letter-spacing:-0.600px;width:114px;text-align:center;">0x0000000003da0fff</div>
<div style="left:611px;top:406.00px;font-size:12px;line-height:15px;color:#555;font-family:'Liberation Sans', sans-serif;font-weight:normal;white-space:pre;letter-spacing:-0.740px;">&yen;MTK6582_W450&yen;ROM&yen;STAR-W450_v111_07232014&yen;secro.img</div>
<div style="left:242px;top:425px;width:737px;height:22px;background:#55a77f"></div>
<div style="left:242px;top:447px;width:738px;height:1px;background:#808080"></div>
<div style="left:261px;top:425px;width:1px;height:22px;background:#808080"></div>
<div style="left:335px;top:425px;width:1px;height:22px;background:#808080"></div>
<div style="left:450px;top:425px;width:1px;height:22px;background:#808080"></div>
<div style="left:565px;top:425px;width:1px;height:22px;background:#808080"></div>
<div style="left:246px;top:431px;width:12px;height:12px;border:1px solid #606060"></div>
<svg style="position:absolute;left:247px;top:433px" width="10" height="9" viewBox="0 0 10 9"><path d="M1.5 4 L4 6.8 L8.5 1.5" fill="none" stroke="#606060" stroke-width="2.2"/></svg>
<div style="left:265.6px;top:429.00px;font-size:12px;line-height:15px;color:#5a5a5a;font-family:'Liberation Sans', sans-serif;font-weight:normal;white-space:pre;letter-spacing:-0.750px;">LOGO</div>
<div style="left:336px;top:429.00px;font-size:12px;line-height:15px;color:#555;font-family:'Liberation Sans', sans-serif;font-weight:normal;white-space:pre;letter-spacing:-0.600px;width:114px;text-align:center;">0x0000000004400000</div>
<div style="left:451px;top:429.00px;font-size:12px;line-height:15px;color:#555;font-family:'Liberation Sans', sans-serif;font-weight:normal;white-space:pre;letter-spacing:-0.600px;width:114px;text-align:center;">0x000000000443bc99</div>
<div style="left:611px;top:429.00px;font-size:12px;line-height:15px;color:#555;font-family:'Liberation Sans', sans-serif;font-weight:normal;white-space:pre;letter-spacing:-0.740px;">&yen;MTK6582_W450&yen;ROM&yen;STAR-W450_v111_07232014&yen;logo.bin</div>
<div style="left:242px;top:448px;width:737px;height:22px;background:#d4d0c8"></div>
<div style="left:242px;top:470px;width:738px;height:1px;background:#808080"></div>
<div style="left:261px;top:448px;width:1px;height:22px;background:#808080"></div>
<div style="left:335px;top:448px;width:1px;height:22px;background:#808080"></div>
<div style="left:450px;top:448px;width:1px;height:22px;background:#808080"></div>
<div style="left:565px;top:448px;width:1px;height:22px;background:#808080"></div>
<div style="left:246px;top:454px;width:12px;height:12px;border:1px solid #606060"></div>
<svg style="position:absolute;left:247px;top:456px" width="10" height="9" viewBox="0 0 10 9"><path d="M1.5 4 L4 6.8 L8.5 1.5" fill="none" stroke="#606060" stroke-width="2.2"/></svg>
<div style="left:265.6px;top:452.00px;font-size:12px;line-height:15px;color:#5a5a5a;font-family:'Liberation Sans', sans-serif;font-weight:normal;white-space:pre;letter-spacing:-0.750px;">EBR2</div>
<div style="left:336px;top:452.00px;font-size:12px;line-height:15px;color:#555;font-family:'Liberation Sans', sans-serif;font-weight:normal;white-space:pre;letter-spacing:-0.600px;width:114px;text-align:center;">0x0000000004700000</div>
<div style="left:451px;top:452.00px;font-size:12px;line-height:15px;color:#555;font-family:'Liberation Sans', sans-serif;font-weight:normal;white-space:pre;letter-spacing:-0.600px;width:114px;text-align:center;">0x00000000047001ff</div>
<div style="left:611px;top:452.00px;font-size:12px;line-height:15px;color:#555;font-family:'Liberation Sans', sans-serif;font-weight:normal;white-space:pre;letter-spacing:-0.740px;">&yen;MTK6582_W450&yen;ROM&yen;STAR-W450_v111_07232014&yen;EBR2</div>
<div style="left:242px;top:471px;width:737px;height:22px;background:#55a77f"></div>
<div style="left:242px;top:493px;width:738px;height:1px;background:#808080"></div>
<div style="left:261px;top:471px;width:1px;height:22px;background:#808080"></div>
<div style="left:335px;top:471px;width:1px;height:22px;background:#808080"></div>
<div style="left:450px;top:471px;width:1px;height:22px;background:#808080"></div>
<div style="left:565px;top:471px;width:1px;height:22px;background:#808080"></div>
<div style="left:246px;top:477px;width:12px;height:12px;border:1px solid #606060"></div>
<svg style="position:absolute;left:247px;top:479px" width="10" height="9" viewBox="0 0 10 9"><path d="M1.5 4 L4 6.8 L8.5 1.5" fill="none" stroke="#606060" stroke-width="2.2"/></svg>
<div style="left:265.6px;top:475.00px;font-size:12px;line-height:15px;color:#5a5a5a;font-family:'Liberation Sans', sans-serif;font-weight:normal;white-space:pre;letter-spacing:-0.750px;">ANDROID</div>
<div style="left:336px;top:475.00px;font-size:12px;line-height:15px;color:#555;font-family:'Liberation Sans', sans-serif;font-weight:normal;white-space:pre;letter-spacing:-0.600px;width:114px;text-align:center;">0x0000000005180000</div>
<div style="left:451px;top:475.00px;font-size:12px;line-height:15px;color:#555;font-family:'Liberation Sans', sans-serif;font-weight:normal;white-space:pre;letter-spacing:-0.600px;width:114px;text-align:center;">0x0000000020b47347</div>
<div style="left:611px;top:475.00px;font-size:12px;line-height:15px;color:#555;font-family:'Liberation Sans', sans-serif;font-weight:normal;white-space:pre;letter-spacing:-0.740px;">&yen;MTK6582_W450&yen;ROM&yen;STAR-W450_v111_07232014&yen;system.img</div>
<div style="left:242px;top:494px;width:737px;height:22px;background:#d4d0c8"></div>
<div style="left:242px;top:516px;width:738px;height:1px;background:#808080"></div>
<div style="left:261px;top:494px;width:1px;height:22px;background:#808080"></div>
<div style="left:335px;top:494px;width:1px;height:22px;background:#808080"></div>
<div style="left:450px;top:494px;width:1px;height:22px;background:#808080"></div>
<div style="left:565px;top:494px;width:1px;height:22px;background:#808080"></div>
<div style="left:246px;top:500px;width:12px;height:12px;border:1px solid #606060"></div>
<svg style="position:absolute;left:247px;top:502px" width="10" height="9" viewBox="0 0 10 9"><path d="M1.5 4 L4 6.8 L8.5 1.5" fill="none" stroke="#606060" stroke-width="2.2"/></svg>
<div style="left:265.6px;top:498.00px;font-size:12px;line-height:15px;color:#5a5a5a;font-family:'Liberation Sans', sans-serif;font-weight:normal;white-space:pre;letter-spacing:-0.750px;">CACHE</div>
<div style="left:336px;top:498.00px;font-size:12px;line-height:15px;color:#555;font-family:'Liberation Sans', sans-serif;font-weight:normal;white-space:pre;letter-spacing:-0.600px;width:114px;text-align:center;">0x0000000030d80000</div>
<div style="left:451px;top:498.00px;font-size:12px;line-height:15px;color:#555;font-family:'Liberation Sans', sans-serif;font-weight:normal;white-space:pre;letter-spacing:-0.600px;width:114px;text-align:center;">0x0000000031386093</div>
<div style="left:611px;top:498.00px;font-size:12px;line-height:15px;color:#555;font-family:'Liberation Sans', sans-serif;font-weight:normal;white-space:pre;letter-spacing:-0.740px;">&yen;MTK6582_W450&yen;ROM&yen;STAR-W450_v111_07232014&yen;cache.img</div>
<div style="left:242px;top:517px;width:737px;height:22px;background:#55a77f"></div>
<div style="left:242px;top:539px;width:738px;height:1px;background:#808080"></div>
<div style="left:261px;top:517px;width:1px;height:22px;background:#808080"></div>
<div style="left:335px;top:517px;width:1px;height:22px;background:#808080"></div>
<div style="left:450px;top:517px;width:1px;height:22px;background:#808080"></div>
<div style="left:565px;top:517px;width:1px;height:22px;background:#808080"></div>
<div style="left:246px;top:523px;width:12px;height:12px;border:1px solid #606060"></div>
<svg style="position:absolute;left:247px;top:525px" width="10" height="9" viewBox="0 0 10 9"><path d="M1.5 4 L4 6.8 L8.5 1.5" fill="none" stroke="#606060" stroke-width="2.2"/></svg>
<div style="left:265.6px;top:521.00px;font-size:12px;line-height:15px;color:#5a5a5a;font-family:'Liberation Sans', sans-serif;font-weight:normal;white-space:pre;letter-spacing:-0.750px;">USRDATA</div>
<div style="left:336px;top:521.00px;font-size:12px;line-height:15px;color:#555;font-family:'Liberation Sans', sans-serif;font-weight:normal;white-space:pre;letter-spacing:-0.600px;width:114px;text-align:center;">0x0000000038b80000</div>
<div style="left:451px;top:521.00px;font-size:12px;line-height:15px;color:#555;font-family:'Liberation Sans', sans-serif;font-weight:normal;white-space:pre;letter-spacing:-0.600px;width:114px;text-align:center;">0x0000000039dd81cb</div>
<div style="left:611px;top:521.00px;font-size:12px;line-height:15px;color:#555;font-family:'Liberation Sans', sans-serif;font-weight:normal;white-space:pre;letter-spacing:-0.740px;">&yen;MTK6582_W450&yen;ROM&yen;STAR-W450_v111_07232014&yen;userdata.img</div>
<div style="left:242px;top:540px;width:737px;height:32px;background:#d4d0c8"></div>
<div style="left:568px;top:266px;width:46px;height:270px;overflow:hidden"><div style="left:0px;top:0px;width:7px;height:8px;background:#c7c3bb"></div><div style="left:7px;top:0px;width:7px;height:8px;background:#c4c0b8"></div><div style="left:14px;top:0px;width:8px;height:8px;background:#c8c4bc"></div><div style="left:22px;top:0px;width:8px;height:8px;background:#ccc8c0"></div><div style="left:30px;top:0px;width:8px;height:8px;background:#c2beb6"></div><div style="left:38px;top:0px;width:8px;height:8px;background:#c3bfb7"></div><div style="left:0px;top:8px;width:7px;height:8px;background:#cfcbc3"></div><div style="left:7px;top:8px;width:7px;height:8px;background:#cac6be"></div><div style="left:14px;top:8px;width:8px;height:8px;background:#c3bfb7"></div><div style="left:22px;top:8px;width:8px;height:8px;background:#c7c3bb"></div><div style="left:30px;top:8px;width:8px;height:8px;background:#cbc7bf"></div><div style="left:38px;top:8px;width:8px;height:8px;background:#c2beb6"></div><div style="left:0px;top:16px;width:7px;height:8px;background:#acc7b4"></div><div style="left:7px;top:16px;width:7px;height:8px;background:#a6c1ae"></div><div style="left:14px;top:16px;width:8px;height:8px;background:#a1bca9"></div><div style="left:22px;top:16px;width:8px;height:8px;background:#9eb9a6"></div><div style="left:30px;top:16px;width:8px;height:8px;background:#9fbaa7"></div><div style="left:38px;top:16px;width:8px;height:8px;background:#a4bfac"></div><div style="left:0px;top:24px;width:7px;height:8px;background:#55a37d"></div><div style="left:7px;top:24px;width:7px;height:8px;background:#509e78"></div><div style="left:14px;top:24px;width:8px;height:8px;background:#52a07a"></div><div style="left:22px;top:24px;width:8px;height:8px;background:#509e78"></div><div style="left:30px;top:24px;width:8px;height:8px;background:#57a57f"></div><div style="left:38px;top:24px;width:8px;height:8px;background:#55a37d"></div><div style="left:0px;top:32px;width:7px;height:8px;background:#4f9d77"></div><div style="left:7px;top:32px;width:7px;height:8px;background:#5caa84"></div><div style="left:14px;top:32px;width:8px;height:8px;background:#58a680"></div><div style="left:22px;top:32px;width:8px;height:8px;background:#509e78"></div><div style="left:30px;top:32px;width:8px;height:8px;background:#52a07a"></div><div style="left:38px;top:32px;width:8px;height:8px;background:#59a781"></div><div style="left:0px;top:40px;width:7px;height:8px;background:#9abfa8"></div><div style="left:7px;top:40px;width:7px;height:8px;background:#99bea7"></div><div style="left:14px;top:40px;width:8px;height:8px;background:#90b59e"></div><div style="left:22px;top:40px;width:8px;height:8px;background:#99bea7"></div><div style="left:30px;top:40px;width:8px;height:8px;background:#99bea7"></div><div style="left:38px;top:40px;width:8px;height:8px;background:#96bba4"></div><div style="left:0px;top:48px;width:7px;height:8px;background:#c2beb6"></div><div style="left:7px;top:48px;width:7px;height:8px;background:#c5c1b9"></div><div style="left:14px;top:48px;width:8px;height:8px;background:#c2beb6"></div><div style="left:22px;top:48px;width:8px;height:8px;background:#cac6be"></div><div style="left:30px;top:48px;width:8px;height:8px;background:#cfcbc3"></div><div style="left:38px;top:48px;width:8px;height:8px;background:#c4c0b8"></div><div style="left:0px;top:56px;width:7px;height:8px;background:#c6c2ba"></div><div style="left:7px;top:56px;width:7px;height:8px;background:#c8c4bc"></div><div style="left:14px;top:56px;width:8px;height:8px;background:#c4c0b8"></div><div style="left:22px;top:56px;width:8px;height:8px;background:#cac6be"></div><div style="left:30px;top:56px;width:8px;height:8px;background:#c3bfb7"></div><div style="left:38px;top:56px;width:8px;height:8px;background:#cbc7bf"></div><div style="left:0px;top:64px;width:7px;height:8px;background:#86b59a"></div><div style="left:7px;top:64px;width:7px;height:8px;background:#8ab99e"></div><div style="left:14px;top:64px;width:8px;height:8px;background:#8fbea3"></div><div style="left:22px;top:64px;width:8px;height:8px;background:#8cbba0"></div><div style="left:30px;top:64px;width:8px;height:8px;background:#84b398"></div><div style="left:38px;top:64px;width:8px;height:8px;background:#83b297"></div><div style="left:0px;top:72px;width:7px;height:8px;background:#58a680"></div><div style="left:7px;top:72px;width:7px;height:8px;background:#58a680"></div><div style="left:14px;top:72px;width:8px;height:8px;background:#59a781"></div><div style="left:22px;top:72px;width:8px;height:8px;background:#52a07a"></div><div style="left:30px;top:72px;width:8px;height:8px;background:#54a27c"></div><div style="left:38px;top:72px;width:8px;height:8px;background:#509e78"></div><div style="left:0px;top:80px;width:7px;height:8px;background:#57a57f"></div><div style="left:7px;top:80px;width:7px;height:8px;background:#5aa882"></div><div style="left:14px;top:80px;width:8px;height:8px;background:#509e78"></div><div style="left:22px;top:80px;width:8px;height:8px;background:#58a680"></div><div style="left:30px;top:80px;width:8px;height:8px;background:#4f9d77"></div><div style="left:38px;top:80px;width:8px;height:8px;background:#58a680"></div><div style="left:0px;top:88px;width:7px;height:8px;background:#b0c0b1"></div><div style="left:7px;top:88px;width:7px;height:8px;background:#b4c4b5"></div><div style="left:14px;top:88px;width:8px;height:8px;background:#b7c7b8"></div><div style="left:22px;top:88px;width:8px;height:8px;background:#b5c5b6"></div><div style="left:30px;top:88px;width:8px;height:8px;background:#b3c3b4"></div><div style="left:38px;top:88px;width:8px;height:8px;background:#b9c9ba"></div><div style="left:0px;top:96px;width:7px;height:8px;background:#c7c3bb"></div><div style="left:7px;top:96px;width:7px;height:8px;background:#c9c5bd"></div><div style="left:14px;top:96px;width:8px;height:8px;background:#cbc7bf"></div><div style="left:22px;top:96px;width:8px;height:8px;background:#d0ccc4"></div><div style="left:30px;top:96px;width:8px;height:8px;background:#c9c5bd"></div><div style="left:38px;top:96px;width:8px;height:8px;background:#c7c3bb"></div><div style="left:0px;top:104px;width:7px;height:8px;background:#c6c2ba"></div><div style="left:7px;top:104px;width:7px;height:8px;background:#c5c1b9"></div><div style="left:14px;top:104px;width:8px;height:8px;background:#cecac2"></div><div style="left:22px;top:104px;width:8px;height:8px;background:#c4c0b8"></div><div style="left:30px;top:104px;width:8px;height:8px;background:#cdc9c1"></div><div style="left:38px;top:104px;width:8px;height:8px;background:#cecac2"></div><div style="left:0px;top:112px;width:7px;height:8px;background:#68ac89"></div><div style="left:7px;top:112px;width:7px;height:8px;background:#66aa87"></div><div style="left:14px;top:112px;width:8px;height:8px;background:#6eb28f"></div><div style="left:22px;top:112px;width:8px;height:8px;background:#69ad8a"></div><div style="left:30px;top:112px;width:8px;height:8px;background:#6db18e"></div><div style="left:38px;top:112px;width:8px;height:8px;background:#6cb08d"></div><div style="left:0px;top:120px;width:7px;height:8px;background:#5dab85"></div><div style="left:7px;top:120px;width:7px;height:8px;background:#54a27c"></div><div style="left:14px;top:120px;width:8px;height:8px;background:#5aa882"></div><div style="left:22px;top:120px;width:8px;height:8px;background:#56a47e"></div><div style="left:30px;top:120px;width:8px;height:8px;background:#53a17b"></div><div style="left:38px;top:120px;width:8px;height:8px;background:#58a680"></div><div style="left:0px;top:128px;width:7px;height:8px;background:#509e78"></div><div style="left:7px;top:128px;width:7px;height:8px;background:#509e78"></div><div style="left:14px;top:128px;width:8px;height:8px;background:#57a57f"></div><div style="left:22px;top:128px;width:8px;height:8px;background:#55a37d"></div><div style="left:30px;top:128px;width:8px;height:8px;background:#519f79"></div><div style="left:38px;top:128px;width:8px;height:8px;background:#5ba983"></div><div style="left:0px;top:136px;width:7px;height:8px;background:#c7c3bb"></div><div style="left:7px;top:136px;width:7px;height:8px;background:#c4c0b8"></div><div style="left:14px;top:136px;width:8px;height:8px;background:#d0ccc4"></div><div style="left:22px;top:136px;width:8px;height:8px;background:#c9c5bd"></div><div style="left:30px;top:136px;width:8px;height:8px;background:#c8c4bc"></div><div style="left:38px;top:136px;width:8px;height:8px;background:#c2beb6"></div><div style="left:0px;top:144px;width:7px;height:8px;background:#ccc8c0"></div><div style="left:7px;top:144px;width:7px;height:8px;background:#c3bfb7"></div><div style="left:14px;top:144px;width:8px;height:8px;background:#cecac2"></div><div style="left:22px;top:144px;width:8px;height:8px;background:#cac6be"></div><div style="left:30px;top:144px;width:8px;height:8px;background:#cbc7bf"></div><div style="left:38px;top:144px;width:8px;height:8px;background:#cecac2"></div><div style="left:0px;top:152px;width:7px;height:8px;background:#c9cfc4"></div><div style="left:7px;top:152px;width:7px;height:8px;background:#c8cec3"></div><div style="left:14px;top:152px;width:8px;height:8px;background:#c0c6bb"></div><div style="left:22px;top:152px;width:8px;height:8px;background:#c0c6bb"></div><div style="left:30px;top:152px;width:8px;height:8px;background:#c6ccc1"></div><div style="left:38px;top:152px;width:8px;height:8px;background:#c0c6bb"></div><div style="left:0px;top:160px;width:7px;height:8px;background:#58a680"></div><div style="left:7px;top:160px;width:7px;height:8px;background:#56a47e"></div><div style="left:14px;top:160px;width:8px;height:8px;background:#58a680"></div><div style="left:22px;top:160px;width:8px;height:8px;background:#5ba983"></div><div style="left:30px;top:160px;width:8px;height:8px;background:#56a47e"></div><div style="left:38px;top:160px;width:8px;height:8px;background:#509e78"></div><div style="left:0px;top:168px;width:7px;height:8px;background:#5caa84"></div><div style="left:7px;top:168px;width:7px;height:8px;background:#509e78"></div><div style="left:14px;top:168px;width:8px;height:8px;background:#53a17b"></div><div style="left:22px;top:168px;width:8px;height:8px;background:#56a47e"></div><div style="left:30px;top:168px;width:8px;height:8px;background:#5aa882"></div><div style="left:38px;top:168px;width:8px;height:8px;background:#59a781"></div><div style="left:0px;top:176px;width:7px;height:8px;background:#74ae8f"></div><div style="left:7px;top:176px;width:7px;height:8px;background:#73ad8e"></div><div style="left:14px;top:176px;width:8px;height:8px;background:#7eb899"></div><div style="left:22px;top:176px;width:8px;height:8px;background:#7eb899"></div><div style="left:30px;top:176px;width:8px;height:8px;background:#77b192"></div><div style="left:38px;top:176px;width:8px;height:8px;background:#7db798"></div><div style="left:0px;top:184px;width:7px;height:8px;background:#cbc7bf"></div><div style="left:7px;top:184px;width:7px;height:8px;background:#ccc8c0"></div><div style="left:14px;top:184px;width:8px;height:8px;background:#cfcbc3"></div><div style="left:22px;top:184px;width:8px;height:8px;background:#c9c5bd"></div><div style="left:30px;top:184px;width:8px;height:8px;background:#c6c2ba"></div><div style="left:38px;top:184px;width:8px;height:8px;background:#cdc9c1"></div><div style="left:0px;top:192px;width:7px;height:8px;background:#c8c4bc"></div><div style="left:7px;top:192px;width:7px;height:8px;background:#d0ccc4"></div><div style="left:14px;top:192px;width:8px;height:8px;background:#ccc8c0"></div><div style="left:22px;top:192px;width:8px;height:8px;background:#c7c3bb"></div><div style="left:30px;top:192px;width:8px;height:8px;background:#c2beb6"></div><div style="left:38px;top:192px;width:8px;height:8px;background:#c9c5bd"></div><div style="left:0px;top:200px;width:7px;height:8px;background:#a3beab"></div><div style="left:7px;top:200px;width:7px;height:8px;background:#a0bba8"></div><div style="left:14px;top:200px;width:8px;height:8px;background:#a7c2af"></div><div style="left:22px;top:200px;width:8px;height:8px;background:#9fbaa7"></div><div style="left:30px;top:200px;width:8px;height:8px;background:#a5c0ad"></div><div style="left:38px;top:200px;width:8px;height:8px;background:#9eb9a6"></div><div style="left:0px;top:208px;width:7px;height:8px;background:#52a07a"></div><div style="left:7px;top:208px;width:7px;height:8px;background:#5ba983"></div><div style="left:14px;top:208px;width:8px;height:8px;background:#53a17b"></div><div style="left:22px;top:208px;width:8px;height:8px;background:#519f79"></div><div style="left:30px;top:208px;width:8px;height:8px;background:#5aa882"></div><div style="left:38px;top:208px;width:8px;height:8px;background:#52a07a"></div><div style="left:0px;top:216px;width:7px;height:8px;background:#55a37d"></div><div style="left:7px;top:216px;width:7px;height:8px;background:#55a37d"></div><div style="left:14px;top:216px;width:8px;height:8px;background:#5dab85"></div><div style="left:22px;top:216px;width:8px;height:8px;background:#5caa84"></div><div style="left:30px;top:216px;width:8px;height:8px;background:#56a47e"></div><div style="left:38px;top:216px;width:8px;height:8px;background:#509e78"></div><div style="left:0px;top:224px;width:7px;height:8px;background:#92b7a0"></div><div style="left:7px;top:224px;width:7px;height:8px;background:#97bca5"></div><div style="left:14px;top:224px;width:8px;height:8px;background:#96bba4"></div><div style="left:22px;top:224px;width:8px;height:8px;background:#98bda6"></div><div style="left:30px;top:224px;width:8px;height:8px;background:#94b9a2"></div><div style="left:38px;top:224px;width:8px;height:8px;background:#9ec3ac"></div><div style="left:0px;top:232px;width:7px;height:8px;background:#c4c0b8"></div><div style="left:7px;top:232px;width:7px;height:8px;background:#cfcbc3"></div><div style="left:14px;top:232px;width:8px;height:8px;background:#c8c4bc"></div><div style="left:22px;top:232px;width:8px;height:8px;background:#cfcbc3"></div><div style="left:30px;top:232px;width:8px;height:8px;background:#cac6be"></div><div style="left:38px;top:232px;width:8px;height:8px;background:#c6c2ba"></div><div style="left:0px;top:240px;width:7px;height:8px;background:#cdc9c1"></div><div style="left:7px;top:240px;width:7px;height:8px;background:#c8c4bc"></div><div style="left:14px;top:240px;width:8px;height:8px;background:#c7c3bb"></div><div style="left:22px;top:240px;width:8px;height:8px;background:#ccc8c0"></div><div style="left:30px;top:240px;width:8px;height:8px;background:#d0ccc4"></div><div style="left:38px;top:240px;width:8px;height:8px;background:#c8c4bc"></div><div style="left:0px;top:248px;width:7px;height:8px;background:#85b499"></div><div style="left:7px;top:248px;width:7px;height:8px;background:#84b398"></div><div style="left:14px;top:248px;width:8px;height:8px;background:#83b297"></div><div style="left:22px;top:248px;width:8px;height:8px;background:#84b398"></div><div style="left:30px;top:248px;width:8px;height:8px;background:#84b398"></div><div style="left:38px;top:248px;width:8px;height:8px;background:#85b499"></div><div style="left:0px;top:256px;width:7px;height:8px;background:#59a781"></div><div style="left:7px;top:256px;width:7px;height:8px;background:#52a07a"></div><div style="left:14px;top:256px;width:8px;height:8px;background:#4f9d77"></div><div style="left:22px;top:256px;width:8px;height:8px;background:#56a47e"></div><div style="left:30px;top:256px;width:8px;height:8px;background:#5caa84"></div><div style="left:38px;top:256px;width:8px;height:8px;background:#58a680"></div><div style="left:0px;top:264px;width:7px;height:6px;background:#519f79"></div><div style="left:7px;top:264px;width:7px;height:6px;background:#53a17b"></div><div style="left:14px;top:264px;width:8px;height:6px;background:#53a17b"></div><div style="left:22px;top:264px;width:8px;height:6px;background:#4f9d77"></div><div style="left:30px;top:264px;width:8px;height:6px;background:#519f79"></div><div style="left:38px;top:264px;width:8px;height:6px;background:#55a37d"></div></div>
<div style="left:221px;top:598px;width:797px;height:19px;background:#fff"></div>
<div style="left:221px;top:598px;width:796px;height:1px;background:#808080"></div>
<div style="left:221px;top:598px;width:1px;height:18px;background:#808080"></div>
<div style="left:222px;top:599px;width:318px;height:17px;background:#008080"></div>
<div style="left:572.7px;top:600.00px;font-size:12px;line-height:15px;color:#000;font-family:'Liberation Sans', sans-serif;font-weight:normal;white-space:pre;letter-spacing:-0.495px;">Write Memory 40%</div>
<div style="left:221px;top:617px;width:100px;height:1px;background:#808080"></div>
<div style="left:221px;top:617px;width:1px;height:13px;background:#808080"></div>
<div style="left:221px;top:630px;width:100px;height:1px;background:#fff"></div>
<div style="left:320px;top:617px;width:1px;height:14px;background:#fff"></div>
<div style="left:275.5px;top:617.00px;font-size:12px;line-height:15px;color:#000;font-family:'Liberation Sans', sans-serif;font-weight:normal;white-space:pre;letter-spacing:-0.098px;">3.71M/s</div>
<div style="left:322px;top:617px;width:99px;height:1px;background:#808080"></div>
<div style="left:322px;top:617px;width:1px;height:13px;background:#808080"></div>
<div style="left:322px;top:630px;width:99px;height:1px;background:#fff"></div>
<div style="left:420px;top:617px;width:1px;height:14px;background:#fff"></div>
<div style="left:387.7px;top:617.00px;font-size:12px;line-height:15px;color:#000;font-family:'Liberation Sans', sans-serif;font-weight:normal;white-space:pre;letter-spacing:-0.692px;">4.00M</div>
<div style="left:422px;top:617px;width:58px;height:1px;background:#808080"></div>
<div style="left:422px;top:617px;width:1px;height:13px;background:#808080"></div>
<div style="left:422px;top:630px;width:58px;height:1px;background:#fff"></div>
<div style="left:479px;top:617px;width:1px;height:14px;background:#fff"></div>
<div style="left:481px;top:617px;width:50px;height:1px;background:#808080"></div>
<div style="left:481px;top:617px;width:1px;height:13px;background:#808080"></div>
<div style="left:481px;top:630px;width:50px;height:1px;background:#fff"></div>
<div style="left:530px;top:617px;width:1px;height:14px;background:#fff"></div>
<div style="left:487.6px;top:617.00px;font-size:12px;line-height:15px;color:#000;font-family:'Liberation Sans', sans-serif;font-weight:bold;white-space:pre;letter-spacing:0.007px;">EMMC</div>
<div style="left:532px;top:617px;width:99px;height:1px;background:#808080"></div>
<div style="left:532px;top:617px;width:1px;height:13px;background:#808080"></div>
<div style="left:532px;top:630px;width:99px;height:1px;background:#fff"></div>
<div style="left:630px;top:617px;width:1px;height:14px;background:#fff"></div>
<div style="left:632px;top:617px;width:88px;height:1px;background:#808080"></div>
<div style="left:632px;top:617px;width:1px;height:13px;background:#808080"></div>
<div style="left:632px;top:630px;width:88px;height:1px;background:#fff"></div>
<div style="left:719px;top:617px;width:1px;height:14px;background:#fff"></div>
<div style="left:665.6px;top:617.00px;font-size:12px;line-height:15px;color:#000;font-family:'Liberation Sans', sans-serif;font-weight:normal;white-space:pre;letter-spacing:-0.740px;">2:03</div>
<div style="left:721px;top:617px;width:297px;height:1px;background:#808080"></div>
<div style="left:721px;top:617px;width:1px;height:13px;background:#808080"></div>
<div style="left:721px;top:630px;width:297px;height:1px;background:#fff"></div>
<div style="left:1017px;top:617px;width:1px;height:14px;background:#fff"></div>
<div style="left:725px;top:617.00px;font-size:12px;line-height:15px;color:#000;font-family:'Liberation Sans', sans-serif;font-weight:normal;white-space:pre;letter-spacing:-0.327px;">MediaTek PreLoader USB VCOM Port (COM58)</div>
</body></html>
